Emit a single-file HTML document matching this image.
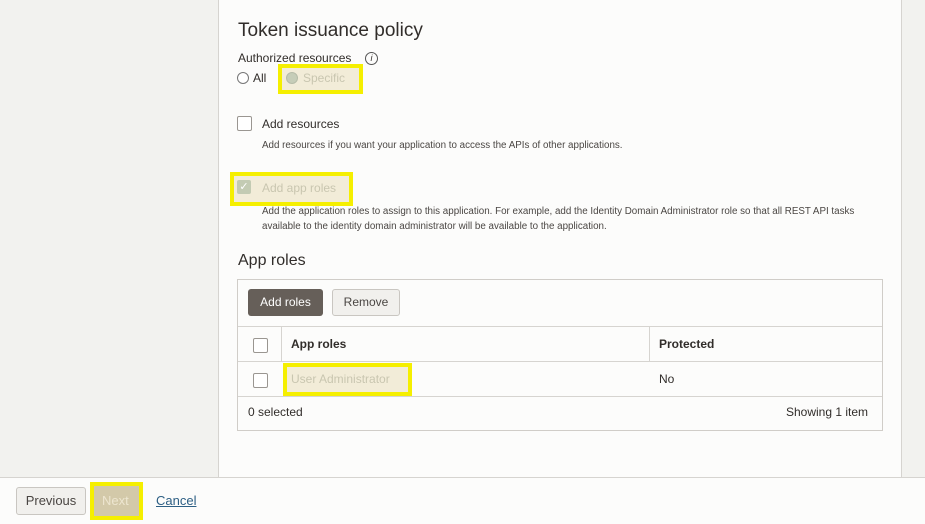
<!DOCTYPE html><html><head><style>
body{margin:0;width:925px;height:523px;background:#f2f2ef;font-family:"Liberation Sans",sans-serif;color:#312d2a;position:relative;overflow:hidden}
.a{position:absolute}
.panel{left:218px;top:-2px;width:682px;height:478px;background:#fcfcfb;border:1px solid #d6d4d0}
.foot{left:0;top:477px;width:925px;height:46px;background:#fcfcfb;border-top:1px solid #d6d4d0}
.y{border:4px solid #f5ef00;background:#f2ecd8;box-sizing:border-box}
.cb{width:13px;height:13px;border:1px solid #9a9691;border-radius:2px;background:#fff}
.s{font-size:9.8px;color:#4a4643}
.bt{border:1px solid #c9c6c1;border-radius:3px;background:#f1f0ed;font-size:13px;color:#4a4643;box-sizing:border-box;text-align:center}
</style></head><body>
<div class="a panel"></div>
<div class="a foot"></div>
<div class="a" style="left:238px;top:20px;font-size:19px">Token issuance policy</div>
<div class="a" style="left:238px;top:51px;font-size:12px">Authorized resources</div>
<div class="a" style="left:365px;top:52px;width:11px;height:11px;border:1px solid #555;border-radius:50%;font-size:9px;text-align:center;line-height:11px;font-style:italic">i</div>
<div class="a" style="left:237px;top:72px;width:10px;height:10px;border:1px solid #777;border-radius:50%;background:#fff"></div>
<div class="a" style="left:253px;top:71px;font-size:12px">All</div>
<div class="a y" style="left:278px;top:64px;width:85px;height:30px"></div>
<div class="a" style="left:286px;top:72px;width:10px;height:10px;border-radius:50%;background:#c6cdb8;border:1px solid #b6bca8"></div>
<div class="a" style="left:303px;top:71px;font-size:12px;color:#c9c6b0">Specific</div>
<div class="a cb" style="left:237px;top:116px"></div>
<div class="a" style="left:262px;top:117px;font-size:12px">Add resources</div>
<div class="a s" style="left:262px;top:140px">Add resources if you want your application to access the APIs of other applications.</div>
<div class="a y" style="left:230px;top:172px;width:123px;height:34px"></div>
<div class="a" style="left:237px;top:180px;width:14px;height:14px;border-radius:2px;background:#c3cbb3;color:#fff;font-size:11px;text-align:center;line-height:14px">✓</div>
<div class="a" style="left:262px;top:181px;font-size:12px;color:#c9c6b0">Add app roles</div>
<div class="a s" style="left:262px;top:204px;line-height:15px">Add the application roles to assign to this application. For example, add the Identity Domain Administrator role so that all REST API tasks<br>available to the identity domain administrator will be available to the application.</div>
<div class="a" style="left:238px;top:252px;font-size:16px">App roles</div>
<div class="a" style="left:237px;top:279px;width:644px;height:150px;border:1px solid #d0cdc8;background:#fcfcfb"></div>
<div class="a" style="left:248px;top:289px;width:75px;height:27px;background:#665f59;border-radius:3px;color:#fff;font-size:12px;line-height:27px;text-align:center">Add roles</div>
<div class="a bt" style="left:332px;top:289px;width:68px;height:27px;line-height:25px;font-size:12px">Remove</div>
<div class="a" style="left:238px;top:326px;width:644px;height:1px;background:#d6d4d0"></div>
<div class="a" style="left:238px;top:361px;width:644px;height:1px;background:#d6d4d0"></div>
<div class="a" style="left:238px;top:396px;width:644px;height:1px;background:#d6d4d0"></div>
<div class="a" style="left:281px;top:327px;width:1px;height:34px;background:#d6d4d0"></div>
<div class="a" style="left:649px;top:327px;width:1px;height:34px;background:#d6d4d0"></div>
<div class="a cb" style="left:253px;top:338px"></div>
<div class="a" style="left:291px;top:337px;font-size:12px;font-weight:bold">App roles</div>
<div class="a" style="left:659px;top:337px;font-size:12px;font-weight:bold">Protected</div>
<div class="a cb" style="left:253px;top:373px"></div>
<div class="a y" style="left:283px;top:363px;width:129px;height:33px"></div>
<div class="a" style="left:291px;top:372px;font-size:12px;color:#c9c6b0">User Administrator</div>
<div class="a" style="left:659px;top:372px;font-size:12px">No</div>
<div class="a" style="left:248px;top:405px;font-size:12px">0 selected</div>
<div class="a" style="left:786px;top:405px;font-size:12px">Showing 1 item</div>
<div class="a bt" style="left:16px;top:487px;width:70px;height:28px;line-height:26px">Previous</div>
<div class="a y" style="left:90px;top:482px;width:53px;height:38px;background:#d3c9a9"></div>
<div class="a" style="left:102px;top:493px;font-size:13px;color:#ede6d0">Next</div>
<div class="a" style="left:156px;top:493px;font-size:13px;color:#2d5f84;text-decoration:underline">Cancel</div>
</body></html>
